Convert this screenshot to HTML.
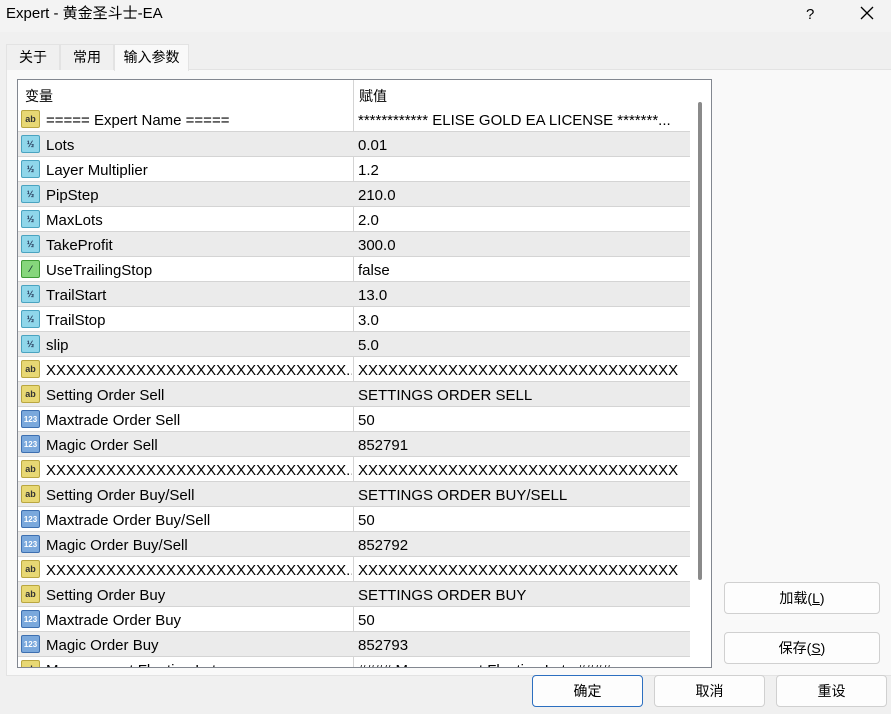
<!DOCTYPE html>
<html><head><meta charset="utf-8"><style>
*{margin:0;padding:0;box-sizing:border-box}
body{width:891px;height:714px;background:#f0f0f0;font-family:"Liberation Sans","Noto Sans CJK SC",sans-serif;position:relative;overflow:hidden;color:#000}
.title{position:absolute;left:0;top:0;width:891px;height:32px;background:#f3f3f3;font-size:15px;line-height:28px;padding-left:6px}
.tab{position:absolute;top:44px;height:26px;font-size:14px;line-height:25px;text-align:center;border:1px solid #e3e3e3;border-bottom:none;background:#f0f0f0}
.panel{position:absolute;left:6px;top:69px;width:890px;height:607px;background:#f9f9f9;border:1px solid #e3e3e3}
.list{position:absolute;left:17px;top:79px;width:695px;height:589px;background:#fff;border:1px solid #828790;overflow:hidden}
.hdr{position:absolute;left:0;top:0;width:672px;height:27px;font-size:14px}
.row{position:absolute;left:0;width:672px;height:25px;border-bottom:1px solid #d4d4d4;font-size:15px;line-height:28px;white-space:nowrap}
.g{background:#ebebeb}
.c1{position:absolute;left:28px;width:306px;overflow:hidden}
.c2{position:absolute;left:340px;width:330px;overflow:hidden}
.sep{position:absolute;left:335px;top:0;width:1px;height:589px;background:#d4d4d4}
.ic{position:absolute;left:3px;top:3px;width:19px;height:18px;border-radius:2px;font-size:9px;font-weight:bold;line-height:17px;text-align:center}
.ab{background:#e8d874;border:1px solid #b9a640;color:#333}
.f{background:#8fd6ea;border:1px solid #4aa3c0;color:#235}
.n{background:#7aa8dc;border:1px solid #3d6fb0;color:#fff;font-size:8px}
.b{background:#86d67c;border:1px solid #3e9a36;color:#133}
.btn{position:absolute;height:32px;background:#fdfdfd;border:1px solid #d0d0d0;border-radius:4px;font-size:14px;line-height:30px;text-align:center}
.thumb{position:absolute;left:680px;top:22px;width:4px;height:478px;background:#8a8a8a;border-radius:2px}
</style></head><body>
<div class="title">Expert - 黄金圣斗士-EA<span style="position:absolute;left:806px;top:1px">?</span><svg style="position:absolute;left:860px;top:6px" width="14" height="14"><path d="M1 1L13 13M13 1L1 13" stroke="#000" stroke-width="1.3"/></svg></div>
<div class="panel"></div>
<div class="tab" style="left:6px;width:54px">关于</div>
<div class="tab" style="left:60px;width:54px">常用</div>
<div class="tab" style="left:114px;width:75px;background:#f9f9f9;height:27px">输入参数</div>
<div class="list">
<div class="sep"></div>
<div class="hdr"><span style="position:absolute;left:7px;top:6px">变量</span><span style="position:absolute;left:341px;top:6px">赋值</span></div>
<div class="row" style="top:27px"><div class="ic ab">ab</div><span class="c1">===== Expert Name =====</span><span class="c2">************ ELISE GOLD EA LICENSE *******...</span></div>
<div class="row g" style="top:52px"><div class="ic f">½</div><span class="c1">Lots</span><span class="c2">0.01</span></div>
<div class="row" style="top:77px"><div class="ic f">½</div><span class="c1">Layer Multiplier</span><span class="c2">1.2</span></div>
<div class="row g" style="top:102px"><div class="ic f">½</div><span class="c1">PipStep</span><span class="c2">210.0</span></div>
<div class="row" style="top:127px"><div class="ic f">½</div><span class="c1">MaxLots</span><span class="c2">2.0</span></div>
<div class="row g" style="top:152px"><div class="ic f">½</div><span class="c1">TakeProfit</span><span class="c2">300.0</span></div>
<div class="row" style="top:177px"><div class="ic b">⁄</div><span class="c1">UseTrailingStop</span><span class="c2">false</span></div>
<div class="row g" style="top:202px"><div class="ic f">½</div><span class="c1">TrailStart</span><span class="c2">13.0</span></div>
<div class="row" style="top:227px"><div class="ic f">½</div><span class="c1">TrailStop</span><span class="c2">3.0</span></div>
<div class="row g" style="top:252px"><div class="ic f">½</div><span class="c1">slip</span><span class="c2">5.0</span></div>
<div class="row" style="top:277px"><div class="ic ab">ab</div><span class="c1">XXXXXXXXXXXXXXXXXXXXXXXXXXXXXX...</span><span class="c2">XXXXXXXXXXXXXXXXXXXXXXXXXXXXXXXX</span></div>
<div class="row g" style="top:302px"><div class="ic ab">ab</div><span class="c1">Setting Order Sell</span><span class="c2">SETTINGS ORDER SELL</span></div>
<div class="row" style="top:327px"><div class="ic n">123</div><span class="c1">Maxtrade Order Sell</span><span class="c2">50</span></div>
<div class="row g" style="top:352px"><div class="ic n">123</div><span class="c1">Magic Order Sell</span><span class="c2">852791</span></div>
<div class="row" style="top:377px"><div class="ic ab">ab</div><span class="c1">XXXXXXXXXXXXXXXXXXXXXXXXXXXXXX...</span><span class="c2">XXXXXXXXXXXXXXXXXXXXXXXXXXXXXXXX</span></div>
<div class="row g" style="top:402px"><div class="ic ab">ab</div><span class="c1">Setting Order Buy/Sell</span><span class="c2">SETTINGS ORDER BUY/SELL</span></div>
<div class="row" style="top:427px"><div class="ic n">123</div><span class="c1">Maxtrade Order Buy/Sell</span><span class="c2">50</span></div>
<div class="row g" style="top:452px"><div class="ic n">123</div><span class="c1">Magic Order Buy/Sell</span><span class="c2">852792</span></div>
<div class="row" style="top:477px"><div class="ic ab">ab</div><span class="c1">XXXXXXXXXXXXXXXXXXXXXXXXXXXXXX...</span><span class="c2">XXXXXXXXXXXXXXXXXXXXXXXXXXXXXXXX</span></div>
<div class="row g" style="top:502px"><div class="ic ab">ab</div><span class="c1">Setting Order Buy</span><span class="c2">SETTINGS ORDER BUY</span></div>
<div class="row" style="top:527px"><div class="ic n">123</div><span class="c1">Maxtrade Order Buy</span><span class="c2">50</span></div>
<div class="row g" style="top:552px"><div class="ic n">123</div><span class="c1">Magic Order Buy</span><span class="c2">852793</span></div>
<div class="row" style="top:577px"><div class="ic ab">ab</div><span class="c1">Management Floating Lots</span><span class="c2">#### Management Floating Lots ####</span></div>
<div class="thumb"></div>
</div>
<div class="btn" style="left:724px;top:582px;width:156px">加载(<u>L</u>)</div>
<div class="btn" style="left:724px;top:632px;width:156px">保存(<u>S</u>)</div>
<div class="btn" style="left:532px;top:675px;width:111px;border:1px solid #2c6fc0">确定</div>
<div class="btn" style="left:654px;top:675px;width:111px">取消</div>
<div class="btn" style="left:776px;top:675px;width:111px">重设</div>
</body></html>
